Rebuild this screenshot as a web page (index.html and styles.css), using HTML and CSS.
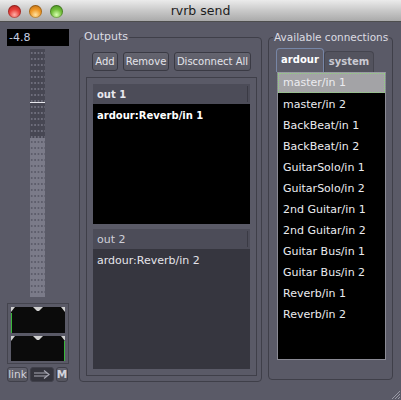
FILE: index.html
```html
<!DOCTYPE html>
<html>
<head>
<meta charset="utf-8">
<link rel="stylesheet" href="styles.css">
</head>
<body>
<div class="window">
  <div class="titlebar">
    <div class="lights">
      <span class="light red"></span>
      <span class="light amber"></span>
      <span class="light green"></span>
    </div>
    <div class="title">rvrb send</div>
    <div></div>
  </div>
  <div class="content">
    <div class="strip">
      <div class="gain">-4.8</div>
      <div class="fader">
        <div class="fader-top"></div>
        <div class="fader-line"></div>
        <div class="fader-mid"></div>
        <div class="fader-low"></div>
      </div>
      <div class="meters">
        <svg class="meter" width="54" height="26" viewBox="0 0 54 26">
          <rect width="54" height="26" fill="#0b0b0b"/>
          <polygon points="0,0 4,0 0,5" fill="#d0d0d0"/>
          <polygon points="50,0 54,0 54,5" fill="#d0d0d0"/>
          <polygon points="22,0 32,0 28,4 26,4" fill="#d0d0d0"/>
          <rect x="0" y="6" width="1" height="20" fill="#39b83a"/>
        </svg>
        <svg class="meter" width="54" height="25" viewBox="0 0 54 25">
          <rect width="54" height="25" fill="#0b0b0b"/>
          <polygon points="0,0 4,0 0,5" fill="#d0d0d0"/>
          <polygon points="50,0 54,0 54,5" fill="#d0d0d0"/>
          <polygon points="22,0 32,0 28,4 26,4" fill="#d0d0d0"/>
          <rect x="53" y="5" width="1" height="20" fill="#39b83a"/>
        </svg>
      </div>
      <div class="strip-buttons">
        <span class="sbtn link">link</span>
        <span class="sbtn arrow">
          <svg width="22" height="13" viewBox="0 0 22 13">
            <path d="M3 5h13M3 8h13" stroke="#a8a8b4" stroke-width="1.2"/>
            <path d="M13 2.5l5 4-5 4" fill="none" stroke="#a8a8b4" stroke-width="1.2"/>
          </svg>
        </span>
        <span class="sbtn mute">M</span>
      </div>
    </div>

    <fieldset class="group outputs">
      <legend>Outputs</legend>
      <div class="btn-row">
        <span class="btn b-add">Add</span>
        <span class="btn b-remove">Remove</span>
        <span class="btn b-disc">Disconnect All</span>
      </div>
      <div class="port-frame">
        <div class="port">
          <div class="port-head"><span class="port-name bold">out 1</span></div>
          <div class="port-body active">
            <div class="conn bold">ardour:Reverb/in 1</div>
          </div>
        </div>
        <div class="port">
          <div class="port-head"><span class="port-name">out 2</span></div>
          <div class="port-body">
            <div class="conn">ardour:Reverb/in 2</div>
          </div>
        </div>
      </div>
    </fieldset>

    <fieldset class="group avail">
      <legend>Available connections</legend>
      <div class="tabs">
        <span class="tab current">ardour</span>
        <span class="tab">system</span>
      </div>
      <ul class="list">
        <li class="sel">master/in 1</li>
        <li>master/in 2</li>
        <li>BackBeat/in 1</li>
        <li>BackBeat/in 2</li>
        <li>GuitarSolo/in 1</li>
        <li>GuitarSolo/in 2</li>
        <li>2nd Guitar/in 1</li>
        <li>2nd Guitar/in 2</li>
        <li>Guitar Bus/in 1</li>
        <li>Guitar Bus/in 2</li>
        <li>Reverb/in 1</li>
        <li>Reverb/in 2</li>
      </ul>
    </fieldset>
  </div>
  <svg class="grip" width="11" height="11" viewBox="0 0 11 11">
    <path d="M10 2L2 10M10 5L5 10M10 8L8 10" stroke="#9a9aa6" stroke-width="1"/>
  </svg>
</div>
</body>
</html>
```

FILE: styles.css
```css
* { box-sizing: border-box; }

body {
  margin: 0;
  background: #5a5a67;
  font-family: "DejaVu Sans", "Liberation Sans", sans-serif;
}

.window {
  position: relative;
  width: 401px;
  height: 400px;
  overflow: hidden;
  background: #5a5a67;
}

/* title bar */
.titlebar {
  height: 22px;
  border-bottom: 1px solid #4e4e4e;
  background: linear-gradient(#ebebeb, #c9c9c9 50%, #aaaaaa);
  display: grid;
  grid-template-columns: 1fr auto 1fr;
  align-items: center;
}
.lights {
  display: flex;
  gap: 8px;
  padding-left: 8px;
}
.light {
  width: 13px;
  height: 13px;
  border-radius: 50%;
  box-shadow: inset 0 0 0 1px rgba(0, 0, 0, 0.25);
}
.red { background: radial-gradient(circle at 50% 75%, #ffb0a8 0, #e8403a 45%, #a81c18 100%); }
.amber { background: radial-gradient(circle at 50% 75%, #ffe2a0 0, #f09a28 45%, #b06410 100%); }
.green { background: radial-gradient(circle at 50% 75%, #d8ffb0 0, #74c03c 45%, #3c8418 100%); }
.title {
  font-size: 12.5px;
  color: #1c1c1c;
  line-height: 22px;
}

.content {
  display: flex;
  align-items: flex-start;
}

/* strip on the left */
.strip {
  width: 62px;
  margin-left: 7px;
  padding-top: 7px;
  display: flex;
  flex-direction: column;
}
.gain {
  height: 17px;
  background: #000;
  color: #c6cfe2;
  font-size: 11px;
  line-height: 17px;
  padding-left: 2px;
}
.fader {
  margin-top: 3px;
  margin-left: 23px;
  width: 15px;
  height: 248px;
  display: flex;
  flex-direction: column;
}
.fader-top, .fader-mid {
  background-color: #474753;
  background-image: radial-gradient(circle, #6d6d7b 0.8px, transparent 1.2px);
  background-size: 3.4px 6px;
  background-position: 0 1px;
}
.fader-top { height: 53px; }
.fader-line { height: 1px; background: #e8e8ee; }
.fader-mid { height: 35px; }
.fader-low {
  height: 159px;
  background-color: #7b7b89;
  background-image: radial-gradient(circle, #5e5e6c 0.8px, transparent 1.2px);
  background-size: 3.4px 6px;
  background-position: 0 1px;
}

.meters {
  margin-top: 6px;
  height: 61px;
  border: 1px solid #44444e;
  padding: 3px 3px 2px 3px;
  display: flex;
  flex-direction: column;
  gap: 3px;
}
.meter { display: block; }

.strip-buttons {
  margin-top: 3px;
  display: flex;
  gap: 2px;
}
.sbtn {
  height: 15px;
  border: 1px solid #40404a;
  border-radius: 3px;
  background: linear-gradient(#63636f, #55555f);
  color: #d4d4dc;
  font-size: 10.5px;
  line-height: 13px;
  text-align: center;
  display: flex;
  align-items: center;
  justify-content: center;
}
.link { width: 21px; }
.arrow { width: 24px; background: #34343d; }
.mute { width: 12px; font-weight: bold; }

/* group boxes */
.group {
  margin: 8px 0 0 0;
  border: 1px solid #3f3f49;
  border-radius: 4px;
  min-width: 0;
}
.group legend {
  font-size: 11px;
  line-height: 14px;
  color: #dcdce2;
  padding: 0 1px;
  margin-left: -3px;
  white-space: nowrap;
}
.outputs {
  margin-left: 10px;
  width: 183px;
  padding: 0 4px 5px 6px;
}
.avail {
  margin-left: 6px;
  width: 125px;
  padding: 0 5px 19px 7px;
}
.avail legend {
  font-size: 10.5px;
  margin-left: -3px;
  margin-right: -12px;
}

.btn-row {
  margin-top: 8px;
  padding-left: 6px;
  display: flex;
  gap: 5px;
}
.btn {
  height: 19px;
  border: 1px solid #3a3a44;
  border-radius: 3px;
  background: linear-gradient(#64646f, #575762);
  color: #e4e4ea;
  font-size: 10px;
  line-height: 17px;
  text-align: center;
}
.b-add { width: 26px; }
.b-remove { width: 46px; }
.b-disc { width: 77px; }

.port-frame {
  margin-top: 6px;
  width: 171px;
  border: 1px solid #3f3f49;
  padding: 6px;
  display: flex;
  flex-direction: column;
  gap: 5px;
}
.port-head {
  height: 20px;
  background: #4c4c58;
  display: flex;
  align-items: center;
}
.port-head::after {
  content: "";
  width: 1px;
  height: 16px;
  background: #3a3a44;
  margin-right: 2px;
}
.port-name {
  flex: 1;
  padding-left: 4px;
  font-size: 11px;
  color: #cfcfd8;
}
.port-name.bold {
  font-weight: bold;
  font-size: 10px;
  color: #e8e8ee;
}
.port-body {
  height: 120px;
  background: #36363f;
}
.port-body.active { background: #000; }
.conn {
  padding: 5px 4px 0 4px;
  font-size: 11px;
  line-height: 14px;
  color: #e4e4ea;
}
.conn.bold {
  font-weight: bold;
  font-size: 10px;
  color: #ffffff;
}

/* tabs & list */
.tabs {
  margin-top: 4px;
  display: flex;
  align-items: flex-end;
}
.tab {
  height: 21px;
  width: 50px;
  border: 1px solid #45454f;
  border-bottom: none;
  border-radius: 4px 4px 0 0;
  background: #53535e;
  color: #cacad2;
  font-size: 10px;
  font-weight: bold;
  text-align: center;
  line-height: 20px;
}
.tab.current {
  height: 24px;
  width: 48px;
  background: #5e5e6b;
  border-color: #7786a6;
  color: #ffffff;
  line-height: 22px;
}

.list {
  list-style: none;
  margin: 0 0 0 1px;
  padding: 0;
  width: 109px;
  height: 288px;
  background: #000;
  border: 1px solid #8a8a94;
  border-top-color: #9a9aa4;
}
.list li {
  height: 21px;
  line-height: 21px;
  padding-left: 5px;
  font-size: 11px;
  color: #ececf0;
  white-space: nowrap;
}
.list li.sel {
  background: #a3a3a6;
  outline: 1px dotted #8fd47c;
  outline-offset: -1px;
  line-height: 19px;
  height: 20px;
  margin-bottom: 1px;
}

.grip {
  position: absolute;
  right: 0;
  bottom: 0;
}
```
